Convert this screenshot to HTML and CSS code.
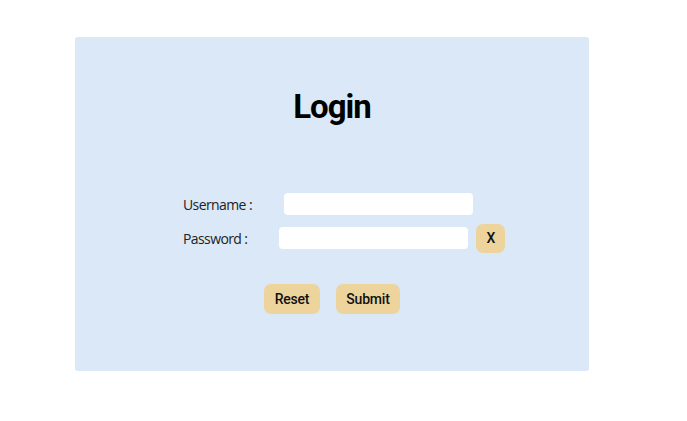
FILE: index.html
```html
<!DOCTYPE html>
<html>
<head>
<meta charset="utf-8">
<link rel="stylesheet" href="styles.css">
</head>
<body>
<div class="card">
  <h1 class="title">Login</h1>
  <form class="form">
    <div class="row">
      <label class="label">Username :</label>
      <input class="input" type="text">
    </div>
    <div class="row">
      <label class="label">Password :</label>
      <input class="input" type="password">
      <button type="button" class="btn btn-x">X</button>
    </div>
    <div class="actions">
      <button type="reset" class="btn btn-reset">Reset</button>
      <button type="button" class="btn btn-submit">Submit</button>
    </div>
  </form>
</div>
</body>
</html>
```
FILE: styles.css
```css
html, body { margin: 0; padding: 0; background: #fff; }
body { padding: 37px 0 0 75px; font-family: Roboto, "Liberation Sans", sans-serif; }
.card {
  width: 514px;
  height: 334px;
  box-sizing: border-box;
  background: #dae8f8;
  border-radius: 3px;
  padding-top: 50px;
}
.title {
  margin: 0;
  text-align: center;
  font-size: 33px;
  font-weight: 700;
  line-height: 40px;
  color: #000;
  letter-spacing: -1px;
}
.form { margin: 62px 0 0 108px; }
.row { display: flex; align-items: center; height: 30px; margin-bottom: 4px; }
.label {
  font-family: "Open Sans", sans-serif;
  font-size: 14px;
  font-weight: 400;
  letter-spacing: -0.6px;
  color: #222;
  margin-right: 32px;
}
.input {
  width: 189px;
  height: 22px;
  box-sizing: border-box;
  border: none;
  border-radius: 4px;
  background: #fff;
  padding: 0;
}
.btn {
  border: none;
  background: #ecd49c;
  border-radius: 7px;
  font-family: Roboto, sans-serif;
  font-size: 14px;
  font-weight: 500;
  letter-spacing: -0.2px;
  color: #111;
  padding: 0;
  height: 30px;
}
.btn-x { width: 29px; height: 29px; margin-left: 8px; }
.actions { display: flex; justify-content: center; gap: 16px; margin: 31px 0 0 -108px; width: 514px; }
.btn-reset { width: 56px; }
.btn-submit { width: 64px; }
```
